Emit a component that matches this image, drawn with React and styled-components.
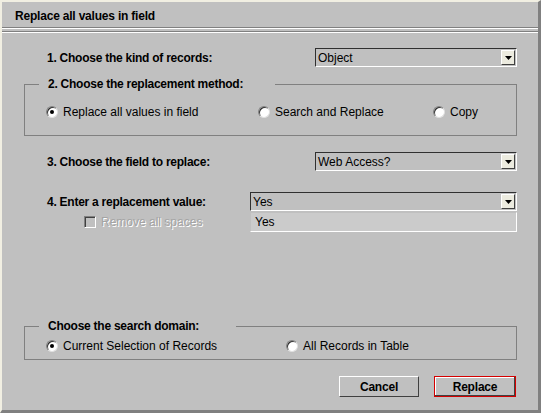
import React from 'react'
import styled, { createGlobalStyle } from 'styled-components'

const Global = createGlobalStyle`
  html, body { margin: 0; padding: 0; background: #c0c0c0; }
  body {
    font-family: "Liberation Sans", Arial, sans-serif;
    font-size: 12px;
    color: #000;
  }
  * { box-sizing: border-box; }
`

const Window = styled.div`
  width: 541px;
  height: 413px;
  background: #c0c0c0;
  border-style: solid;
  border-width: 2px 3px 3px 2px;
  border-color: #f1efe2 #808080 #808080 #f1efe2;
  display: flex;
  flex-direction: column;
`

const TitleBar = styled.div`
  height: 25px;
  padding: 3px 0 0 13px;
  line-height: 22px;
  font-weight: bold;
  letter-spacing: -0.2px;
`

const Rule = styled.div`
  height: 2px;
  border-top: 1px solid #808080;
  border-bottom: 1px solid #ffffff;
  margin-bottom: ${p => p.gap || 0}px;
`

const Body = styled.div`
  padding: 0 21px 0 22px;
  display: flex;
  flex-direction: column;
`

const Row = styled.div`
  display: flex;
  align-items: center;
  justify-content: space-between;
  height: ${p => p.h || 19}px;
  margin-top: ${p => p.top || 0}px;
  padding-left: 23px;
`

const Label = styled.span`
  font-weight: bold;
  letter-spacing: -0.25px;
`

const Select = styled.div`
  width: ${p => p.w}px;
  height: 19px;
  border: 1px solid;
  border-color: #303030 #ffffff #ffffff #303030;
  display: flex;
  align-items: center;
  justify-content: space-between;
  padding-left: 2px;
`

const ArrowBtn = styled.span`
  width: 14px;
  height: 15px;
  margin-right: 1px;
  background: #ecebdf;
  border: 1px solid;
  border-color: #ffffff #404040 #404040 #ffffff;
  display: flex;
  align-items: center;
  justify-content: center;
`

const ListBox = styled.div`
  width: ${p => p.w}px;
  height: 20px;
  background: #cbcbcb;
  border: 1px solid;
  border-color: #c0c0c0 #ffffff #ffffff #c0c0c0;
  display: flex;
  align-items: center;
  padding-left: 4px;
`

const Check = styled.span`
  width: 12px;
  height: 12px;
  border: 1px solid;
  border-color: #808080 #ffffff #ffffff #808080;
  box-shadow: inset 1px 1px 0 #404040;
  margin-right: 5px;
`

const Disabled = styled.span`
  color: #a4a4a4;
  text-shadow: 1px 1px 0 #ffffff;
`

const CheckRow = styled.div`
  display: flex;
  align-items: center;
  padding-left: 37px;
`

const Group = styled.fieldset`
  margin: ${p => p.top}px 0 0 0;
  padding: 0;
  border: 1px solid #808080;
  min-width: 0;
`

const Legend = styled.legend`
  margin-left: 14px;
  padding: 0 ${p => p.gap}px 0 9px;
  line-height: 14px;
  font-weight: bold;
  letter-spacing: -0.25px;
`

const Options = styled.div`
  display: flex;
  padding: ${p => p.pt}px 0 ${p => p.pb}px 21px;
`

const Option = styled.label`
  display: flex;
  align-items: center;
  height: 16px;
  width: ${p => (p.w ? `${p.w}px` : 'auto')};
`

const RadioDot = styled.span`
  width: 12px;
  height: 12px;
  border-radius: 50%;
  background: #ffffff;
  border: 1px solid;
  border-color: #808080 #e0e0e0 #e0e0e0 #808080;
  box-shadow: inset 1px 1px 0 #303030;
  margin-right: 5px;
  display: flex;
  align-items: center;
  justify-content: center;
  &::after {
    content: '';
    width: 4px;
    height: 4px;
    border-radius: 50%;
    background: ${p => (p.on ? '#000' : 'transparent')};
  }
`

const Buttons = styled.div`
  display: flex;
  justify-content: flex-end;
  gap: 15px;
  margin-top: 16px;
  padding-right: 1px;
`

const Button = styled.button`
  font-family: "Liberation Sans", Arial, sans-serif;
  font-size: 12px;
  font-weight: bold;
  letter-spacing: -0.2px;
  width: ${p => p.w}px;
  height: 21px;
  background: #c0c0c0;
  color: #000;
  padding: 0;
  border: 1px solid;
  border-color: #ffffff #404040 #404040 #ffffff;
  ${p => p.primary && `
    border: 1px solid #d40000;
    box-shadow: inset -1px -1px 0 #404040, inset 1px 1px 0 #ffffff;
  `}
`

function Arrow() {
  return (
    <svg width="7" height="4" viewBox="0 0 7 4">
      <path d="M0 0h7L3.5 4z" fill="#000" />
    </svg>
  )
}

function Dropdown({ w, value }) {
  return (
    <Select w={w}>
      <span>{value}</span>
      <ArrowBtn><Arrow /></ArrowBtn>
    </Select>
  )
}

function Radio({ on, w, children }) {
  return (
    <Option w={w}>
      <RadioDot on={on} />
      {children}
    </Option>
  )
}

export default function App() {
  return (
    <>
      <Global />
      <Window>
        <TitleBar>Replace all values in field</TitleBar>
        <Rule gap={2} />
        <Rule />
        <Body>
          <Row top={15}>
            <Label>1. Choose the kind of records:</Label>
            <Dropdown w={202} value="Object" />
          </Row>

          <Group top={10}>
            <Legend gap={32}>2. Choose the replacement method:</Legend>
            <Options pt={13} pb={15}>
              <Radio on w={212}>Replace all values in field</Radio>
              <Radio w={175}>Search and Replace</Radio>
              <Radio>Copy</Radio>
            </Options>
          </Group>

          <Row top={16}>
            <Label>3. Choose the field to replace:</Label>
            <Dropdown w={202} value="Web Access?" />
          </Row>

          <Row top={21}>
            <Label>4. Enter a replacement value:</Label>
            <Dropdown w={267} value="Yes" />
          </Row>
          <Row top={1} h={20}>
            <CheckRow>
              <Check />
              <Disabled>Remove all spaces</Disabled>
            </CheckRow>
            <ListBox w={267}>Yes</ListBox>
          </Row>

          <Group top={87}>
            <Legend gap={37}>Choose the search domain:</Legend>
            <Options pt={5} pb={5}>
              <Radio on w={240}>Current Selection of Records</Radio>
              <Radio>All Records in Table</Radio>
            </Options>
          </Group>

          <Buttons>
            <Button w={80}>Cancel</Button>
            <Button w={82} primary>Replace</Button>
          </Buttons>
        </Body>
      </Window>
    </>
  )
}
